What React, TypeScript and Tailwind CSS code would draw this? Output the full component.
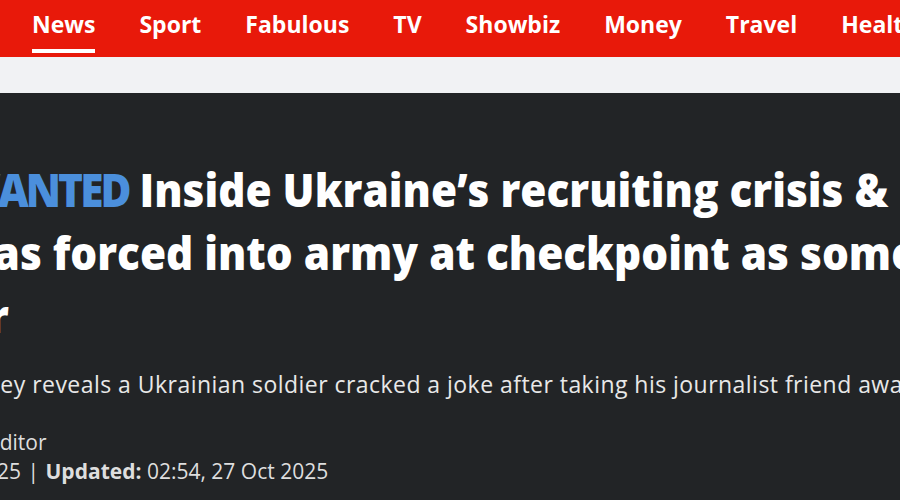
const navItems = ['News', 'Sport', 'Fabulous', 'TV', 'Showbiz', 'Money', 'Travel', 'Health']

function NavBar() {
  return (
    <nav className="h-[57px] bg-[#e8190a] flex items-start gap-[44px] pl-[32px] pt-[13px] overflow-hidden whitespace-nowrap font-['Open_Sans',sans-serif]">
      {navItems.map((item, i) => (
        <div key={item} className="flex flex-col shrink-0">
          <span className="text-[23px] leading-[23px] font-bold text-white">{item}</span>
          {i === 0 && <div className="h-[4px] mt-[13px] bg-white" />}
        </div>
      ))}
    </nav>
  )
}

export default function App() {
  return (
    <div className="w-[900px] h-[500px] overflow-hidden bg-[#222426]">
      <NavBar />
      <div className="h-[36px] bg-[#f1f2f4]" />

      <article className="pt-[65px] overflow-hidden whitespace-nowrap font-['Open_Sans',sans-serif]">
        {/* Headline */}
        <h1 className="text-[46px] leading-[63px] font-extrabold text-white">
          <div className="-ml-[43px] scale-x-[0.92] origin-left">
            <span className="text-[#4b8fdc] tracking-[-0.07em]">WANTED</span> Inside Ukraine’s recruiting crisis & how my friend
          </div>
          <div className="-ml-[45px] scale-x-[0.92] origin-left">was forced into army at checkpoint as some men flee</div>
          <div className="-ml-[76px] scale-x-[0.92] origin-left">war</div>
        </h1>

        {/* Standfirst */}
        <p className="mt-[22px] -ml-[57px] text-[23px] leading-[30px] tracking-[0.02em] text-[#e8e8e8]">
          Starkey reveals a Ukrainian soldier cracked a joke after taking his journalist friend away
        </p>

        {/* Byline */}
        <div className="mt-[29px] text-[21px] leading-[29px] text-[#dedede]">
          <div className="-ml-[12px]">Editor</div>
          <div className="-ml-[27px]">
            2025 <span className="px-[1px]">|</span> <span className="font-bold">Updated:</span> 02:54, 27 Oct 2025
          </div>
        </div>
      </article>
    </div>
  )
}
